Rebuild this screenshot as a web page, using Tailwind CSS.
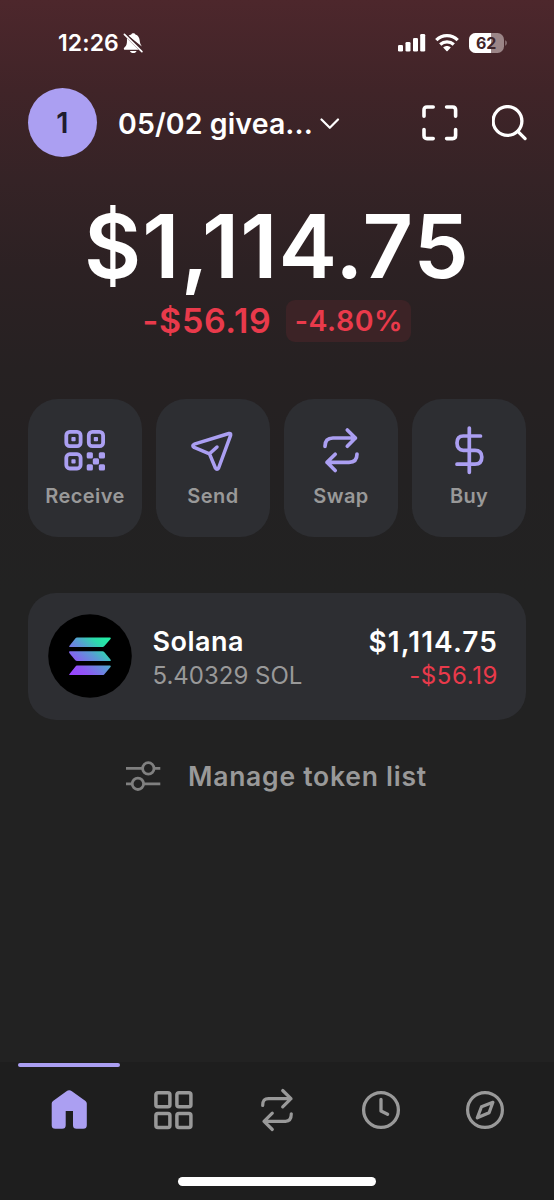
<!DOCTYPE html>
<html lang="en">
<head>
<meta charset="utf-8">
<meta name="viewport" content="width=device-width">
<title>Wallet</title>
<script src="https://cdn.jsdelivr.net/npm/@tailwindcss/browser@4"></script>
</head>
<body class="h-[1200px] w-[554px] overflow-hidden bg-[#222222] font-['Inter',sans-serif]">
<div class="flex h-[1200px] w-[554px] flex-col bg-[linear-gradient(180deg,#4d272c_0px,#402428_90px,#352326_180px,#2c2123_270px,#262122_370px,#232122_480px,#222222_590px)] text-white">

  <!-- Status bar -->
  <div class="flex h-[87.500px] items-center pb-[1px] pl-[58px] pr-[46.500px]">
    <span class="w-[61px] whitespace-nowrap text-[23px] font-semibold leading-none tracking-[0.1px]">12:26</span>
    <svg class="ml-[4px] mt-[1px]" width="22" height="22" viewBox="0 0 22 22">
      <path fill="#fff" d="M5.500 2.800C6.500 2 7.600 1.700 8.200 1.500C8.600.6 9.300.3 10.300.3S12 .6 12.400 1.500C15 2.300 16.500 4.500 16.700 7.600C16.900 10 17.600 11.800 18.800 13.500ZM3.900 5.300L15.600 16.800H2C1 16.800.5 15.800 1 15L3 12.700C4 11.200 4.100 8.500 3.900 5.300ZM7 18H13.500C13 19.400 12 20 10.300 20S7.400 19.400 7 18Z"/>
      <path fill="none" stroke="#43262a" stroke-width="1.200" d="M2.700 .6L19.500 17.300"/>
      <path fill="none" stroke="#fff" stroke-width="1.700" stroke-linecap="round" d="M1.400 1.400L18.900 18.700"/>
    </svg>
    <div class="ml-auto flex items-center">
      <svg width="28" height="18" viewBox="0 0 28 18" fill="#fff">
        <rect x="0" y="11" width="5" height="6.500" rx="1.300"/><rect x="7.500" y="8" width="5" height="9.500" rx="1.300"/><rect x="15" y="4" width="5" height="13.500" rx="1.300"/><rect x="22.200" y="0" width="5" height="17.500" rx="1.300"/>
      </svg>
      <svg class="ml-[9px]" width="24" height="18" viewBox="0 0 24 18">
        <g fill="none" stroke="#fff" stroke-width="3.300"><path d="M1.300 6.200C7.300.2 16.700.2 22.700 6.200"/><path d="M5.200 10.500C9.200 6.900 14.800 6.900 18.800 10.500"/></g>
        <path fill="#fff" d="M8.200 13.600C10.400 11.600 13.600 11.600 15.800 13.600L12.600 17C12.200 17.400 11.800 17.400 11.400 17Z"/>
      </svg>
      <svg class="ml-[10px]" width="39" height="20" viewBox="0 0 39 20">
        <defs><clipPath id="bat"><rect width="35" height="20" rx="6.500"/></clipPath></defs>
        <g clip-path="url(#bat)"><rect width="35" height="20" fill="#9b8587"/><rect width="22" height="20" fill="#fff"/></g>
        <path d="M36.300 7.300C38.200 8.200 38.200 11.800 36.300 12.700Z" fill="#9b8587"/>
        <text x="17.200" y="15.700" text-anchor="middle" font-family="Inter" font-size="16" font-weight="700" fill="#412529">62</text>
      </svg>
    </div>
  </div>

  <!-- Account header -->
  <header class="flex h-[70.500px] items-center pb-[0.500px] pl-[28px] pr-[26px]">
    <div class="flex size-[69px] items-center justify-center rounded-full bg-[#ab9ff2] text-[29px] font-semibold leading-none text-[#1f1c2e]">1</div>
    <span class="ml-[21px] mt-[3px] w-[195px] whitespace-nowrap text-[28.500px] font-semibold leading-none tracking-[0.1px]">05/02 givea...</span>
    <svg class="ml-[7px] mt-[2px]" width="20" height="12" viewBox="0 0 20 12" fill="none" stroke="#fff" stroke-width="2.200" stroke-linecap="round" stroke-linejoin="round"><path d="M1.500 1.500L9.800 9.800L18 1.500"/></svg>
    <svg class="ml-auto mt-[1px]" width="36" height="36" viewBox="0 0 36 36" fill="none" stroke="#fff" stroke-width="3.600" stroke-linecap="round" stroke-linejoin="round"><path d="M2 11.200V5Q2 2 5 2H11.200M24.600 2H30.600Q33.600 2 33.600 5V11.200M33.600 24.600V30.600Q33.600 33.600 30.600 33.600H24.600M11.200 33.600H5Q2 33.600 2 30.600V24.600"/></svg>
    <svg class="ml-[34px] mt-[1px]" width="36" height="36" viewBox="0 0 36 36" fill="none" stroke="#fff" stroke-width="3.300" stroke-linecap="round"><circle cx="15.500" cy="16" r="14.400"/><path d="M25.800 26.300L33.100 33.600"/></svg>
  </header>

  <!-- Balance -->
  <section class="flex h-[241px] flex-col items-center pt-[44px]">
    <div class="whitespace-nowrap text-[88px] font-semibold leading-none tracking-[1.1px]">$1,114.75</div>
    <div class="mt-[10px] flex h-[42px] items-center gap-[15px] text-[#e93a4b]">
      <span class="whitespace-nowrap text-[34px] font-semibold leading-none tracking-[0.7px]">-$56.19</span>
      <span class="flex h-[42px] w-[125px] items-center justify-center whitespace-nowrap rounded-[9px] bg-[#3c2326] text-[28.500px] font-semibold leading-none tracking-[0.5px]">-4.80%</span>
    </div>
  </section>

  <!-- Actions -->
  <section class="flex gap-[14px] px-[28px]">
    <button class="flex h-[138px] w-[114px] flex-col items-center rounded-[30px] bg-[#2d2e32] pt-[26px]">
      <svg width="50" height="50" viewBox="0 0 50 50"><g fill="none" stroke="#ab9ff2" stroke-width="3.800"><rect x="6.300" y="6.900" width="14.300" height="14.300" rx="3.500"/><rect x="28.800" y="6.900" width="14.300" height="14.300" rx="3.500"/><rect x="6.300" y="29.200" width="14.300" height="14.300" rx="3.500"/></g><g fill="#ab9ff2"><rect x="11.400" y="12" width="4.200" height="4.200" rx=".8"/><rect x="33.800" y="12" width="4.200" height="4.200" rx=".8"/><rect x="11.400" y="34.300" width="4.200" height="4.200" rx=".8"/><rect x="26.700" y="27.300" width="6.200" height="6.200" rx="1.500"/><rect x="38.800" y="27.300" width="6.200" height="6.200" rx="1.500"/><rect x="32.800" y="33.300" width="6.200" height="6.200" rx="1.500"/><rect x="26.700" y="39.200" width="6.200" height="6.200" rx="1.500"/><rect x="38.800" y="39.200" width="6.200" height="6.200" rx="1.500"/></g></svg>
      <span class="mt-[10.500px] whitespace-nowrap text-[20px] font-semibold leading-none tracking-[0.4px] text-[#999999]">Receive</span>
    </button>
    <button class="flex h-[138px] w-[114px] flex-col items-center rounded-[30px] bg-[#2d2e32] pt-[26px]">
      <svg width="50" height="50" viewBox="0 0 50 50" fill="none" stroke="#ab9ff2" stroke-width="3.500" stroke-linecap="round" stroke-linejoin="round"><path d="M40.900 8.500L6.300 19.200Q3.400 20.700 6.200 22.400L21.500 28.800L27.400 43Q29 45.400 30.600 43L42.600 10.400Q43.100 8 40.900 8.500ZM21.500 28.800L29 22"/></svg>
      <span class="mt-[10.500px] whitespace-nowrap text-[20px] font-semibold leading-none tracking-[0.5px] text-[#999999]">Send</span>
    </button>
    <button class="flex h-[138px] w-[114px] flex-col items-center rounded-[30px] bg-[#2d2e32] pt-[26px]">
      <svg width="50" height="50" viewBox="0 0 50 50" fill="none" stroke="#ab9ff2" stroke-width="3.700" stroke-linecap="round" stroke-linejoin="round"><path d="M9 21.300C9 15.500 12 13 17 13H39.500M31.300 5L39.400 13L31.300 21.300M41 29C41 34.800 38 37.300 33 37.300H11M19.200 29.300L11 37.300L19.200 45.500"/></svg>
      <span class="mt-[10.500px] whitespace-nowrap text-[20px] font-semibold leading-none tracking-[0.5px] text-[#999999]">Swap</span>
    </button>
    <button class="flex h-[138px] w-[114px] flex-col items-center rounded-[30px] bg-[#2d2e32] pt-[26px]">
      <svg width="50" height="50" viewBox="0 0 50 50" fill="none" stroke="#ab9ff2" stroke-width="3.700" stroke-linecap="round"><path d="M25.300 3V47.300M36.500 11H19.300C14.500 11 13 14 13 18C13 22.500 15.500 25.300 19.300 25.300H31C35.500 25.300 37.800 28 37.800 32C37.800 36.500 35.500 39.200 31 39.200H13"/></svg>
      <span class="mt-[10.500px] whitespace-nowrap text-[20px] font-semibold leading-none tracking-[0.3px] text-[#999999]">Buy</span>
    </button>
  </section>

  <!-- Token row -->
  <section class="mx-[28px] mt-[55.500px] flex h-[127.500px] shrink-0 items-center rounded-[28px] bg-[#2d2e32] pl-[20px] pr-[28px]">
    <svg width="84" height="84" viewBox="0 0 84 84">
      <defs><linearGradient id="sol" gradientUnits="userSpaceOnUse" x1="25" y1="61" x2="59" y2="23"><stop offset="0" stop-color="#9945ff"/><stop offset=".2" stop-color="#8f55f5"/><stop offset=".55" stop-color="#5a9bd5"/><stop offset=".8" stop-color="#2bdcab"/><stop offset="1" stop-color="#22eea4"/></linearGradient></defs>
      <circle cx="42" cy="42" r="41.800" fill="#000"/>
      <g fill="url(#sol)"><path d="M29 23.500H62Q63.500 23.500 62.500 25L56.200 32.300Q55.500 33 54.500 33H21.800Q20.500 33 21.500 31.800L27.500 24.300Q28 23.500 29 23.500Z"/><path d="M21.800 37.300H54.500Q55.500 37.300 56.200 38.100L62.500 45.400Q63.500 47 62 47H29Q28 47 27.300 46.200L21.300 39Q20.300 37.300 21.800 37.300Z"/><path d="M29 51.600H62Q63.500 51.600 62.500 53.100L56.200 60.400Q55.500 61.100 54.500 61.100H21.800Q20.500 61.100 21.500 59.900L27.500 52.400Q28 51.600 29 51.600Z"/></g>
    </svg>
    <div class="ml-[20.500px] mt-[4px] flex flex-col gap-[9px]">
      <span class="whitespace-nowrap text-[27px] font-semibold leading-none tracking-[0.5px]">Solana</span>
      <span class="whitespace-nowrap text-[24px] leading-none text-[#999999]">5.40329 SOL</span>
    </div>
    <div class="ml-auto mt-[4px] flex flex-col items-end gap-[8px]">
      <span class="whitespace-nowrap text-[28px] font-semibold leading-none tracking-[1.1px]">$1,114.75</span>
      <span class="whitespace-nowrap text-[24px] leading-none tracking-[0.6px] text-[#e93a4b]">-$56.19</span>
    </div>
  </section>

  <div class="mt-[41px] flex h-[30px] items-center pl-[125px]">
    <svg width="36" height="30" viewBox="0 0 36 30" fill="none" stroke="#808080" stroke-width="2.800"><path d="M1 7.400H17.400M29 7.400H35.300M1 22.800H7M18.800 22.800H35.300"/><circle cx="23.300" cy="7.400" r="5.700"/><circle cx="12.900" cy="22.800" r="5.700"/></svg>
    <span class="ml-[27px] whitespace-nowrap text-[26.500px] font-semibold leading-none tracking-[0.75px] text-[#999999]">Manage token list</span>
  </div>

  <!-- Bottom navigation -->
  <nav class="mt-auto flex h-[138px] flex-col bg-[#1e1e1e]">
    <div class="flex h-[115px] px-[17px] pt-[1px]">
      <div class="flex w-[104px] flex-col items-center">
        <div class="h-[4px] w-[102px] rounded-full bg-[#ab9ff2]"></div>
        <svg class="mt-[23px]" width="40" height="40" viewBox="0 0 40 40" fill="#ab9ff2"><path d="M2.700 13.600Q2.700 12.200 4 11.100L17.500 1.300Q20.200-.6 22.900 1.300L36.500 11.100Q37.800 12.200 37.800 13.600V35.200Q37.800 38.800 34.200 38.800H27.600Q24 38.800 24 35.200V21H16.700V35.200Q16.700 38.800 13.100 38.800H6.300Q2.700 38.800 2.700 35.200Z"/></svg>
      </div>
      <div class="flex w-[104px] justify-center pt-[27px]">
        <svg width="40" height="40" viewBox="0 0 40 40" fill="none" stroke="#999999" stroke-width="3.500"><rect x="2.900" y="2.700" width="14" height="14" rx="2"/><rect x="23.900" y="2.700" width="14" height="14" rx="2"/><rect x="2.900" y="23.400" width="14" height="14" rx="2"/><rect x="23.900" y="23.400" width="14" height="14" rx="2"/></svg>
      </div>
      <div class="flex w-[104px] justify-center pt-[25px]">
        <svg width="44" height="44" viewBox="0 0 44 44" fill="none" stroke="#999999" stroke-width="3.200" stroke-linecap="round" stroke-linejoin="round"><path d="M7.700 17.500C7.700 12.500 9.500 10.700 13.500 10.700H36M27.700 2.500L36 10.700L27.700 18.900M36.300 25.800C36.300 30.800 34.500 33.300 30.500 33.300H9M17.300 25.100L9 33.300L17.300 41.500"/></svg>
      </div>
      <div class="flex w-[104px] justify-center pt-[27px]">
        <svg width="40" height="40" viewBox="0 0 40 40" fill="none" stroke="#999999" stroke-width="3.300" stroke-linecap="round" stroke-linejoin="round"><circle cx="20" cy="20" r="17.400"/><path d="M20 9.500V21L26.600 24.300"/></svg>
      </div>
      <div class="flex w-[104px] justify-center pt-[27px]">
        <svg width="40" height="40" viewBox="0 0 40 40" fill="none" stroke="#999999" stroke-width="3.200" stroke-linecap="round" stroke-linejoin="round"><circle cx="20" cy="20" r="17.400"/><path d="M27.900 12.300L24.100 22.800L12.300 27.800L16.500 16.800Z"/></svg>
      </div>
    </div>
    <div class="mx-auto h-[9px] w-[198px] rounded-full bg-white"></div>
  </nav>
</div>
</body>
</html>
